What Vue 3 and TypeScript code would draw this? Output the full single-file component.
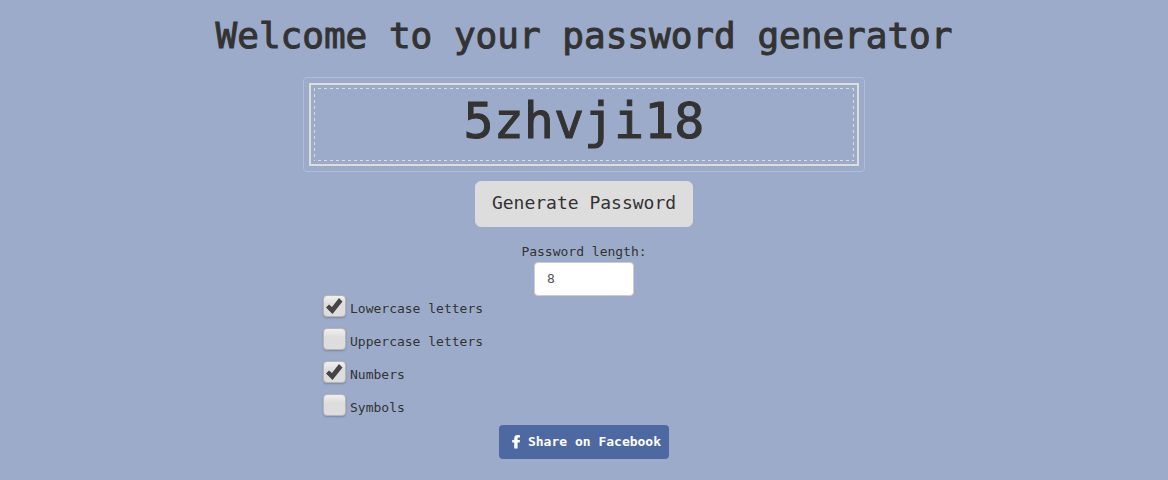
<script setup lang="ts">
import { ref } from 'vue'

interface CharacterSet {
  id: string
  label: string
  characters: string
  enabled: boolean
}

const password = ref('5zhvji18')
const length = ref('8')
const sets = ref<CharacterSet[]>([
  { id: 'lowercase', label: 'Lowercase letters', characters: 'abcdefghijklmnopqrstuvwxyz', enabled: true },
  { id: 'uppercase', label: 'Uppercase letters', characters: 'ABCDEFGHIJKLMNOPQRSTUVWXYZ', enabled: false },
  { id: 'numbers', label: 'Numbers', characters: '0123456789', enabled: true },
  { id: 'symbols', label: 'Symbols', characters: '!@#$%^&*()-_=+?', enabled: false },
])

function generate(): void {
  const pool = sets.value.filter((s) => s.enabled).map((s) => s.characters).join('')
  const count = Math.max(0, Math.min(64, Number(length.value) || 0))
  if (!pool) return
  password.value = Array.from({ length: count }, () => pool[Math.floor(Math.random() * pool.length)]).join('')
}
</script>

<template>
  <main class="page">
    <h1 class="title">Welcome to your password generator</h1>
    <section class="panel">
      <div class="frame">
        <div class="solid">
          <output class="password">{{ password }}</output>
        </div>
      </div>
      <button class="generate" type="button" @click="generate">Generate Password</button>
      <label class="length-label" for="length">Password length:</label>
      <input id="length" v-model="length" class="length" type="text" inputmode="numeric" />
      <ul class="options">
        <li v-for="set in sets" :key="set.id" class="option">
          <span class="tick">
            <input :id="set.id" v-model="set.enabled" type="checkbox" class="box" />
            <svg v-if="set.enabled" class="mark" viewBox="0 0 22 22" aria-hidden="true">
              <path d="M3 12.5 6 9.5 9 12 16 3 19.5 6.5 9.5 19Z" />
            </svg>
          </span>
          <label :for="set.id">{{ set.label }}</label>
        </li>
      </ul>
      <a class="share" href="#share">
        <svg class="logo" viewBox="0 0 8 14" aria-hidden="true">
          <path d="M8 .2V2.6H6.6Q5.6 2.6 5.6 3.6V5H8L7.6 7.5H5.6V13.5H2.2V7.5H.2V5H2.2V3.4Q2.2 0 5.9 0Z" />
        </svg>
        <span>Share on Facebook</span>
      </a>
    </section>
  </main>
</template>

<style>
body {
  background: #9dabca;
}
</style>

<style scoped>
.page {
  padding: 16px;
  color: #333;
  font: 13px/20px "DejaVu Sans Mono", monospace;
}

.title {
  margin: 0 0 21px;
  font-size: 36px;
  font-weight: 400;
  line-height: 40px;
  text-align: center;
  -webkit-text-stroke: 1px #333;
}

.panel {
  display: flex;
  flex-direction: column;
  align-items: center;
  max-width: 562px;
  margin: 0 auto;
}

.frame {
  box-sizing: border-box;
  width: 100%;
  padding: 5px;
  border: 1px solid #b0bdd8;
  border-radius: 4px;
}

.solid {
  padding: 3px;
  border: 2px solid #ddd;
}

.password {
  --dash-x: repeating-linear-gradient(90deg, #ddd 0 1px, transparent 1px 4px, #ddd 4px 6px);
  --dash-y: repeating-linear-gradient(#ddd 0 3px, transparent 3px 6px);
  display: block;
  min-height: 61px;
  padding: 3px 0 9px;
  background:
    var(--dash-x) top / 100% 1px no-repeat,
    var(--dash-x) bottom / 100% 1px no-repeat,
    var(--dash-y) left / 1px 100% no-repeat,
    var(--dash-y) right / 1px 100% no-repeat;
  font-size: 50px;
  line-height: 61px;
  text-align: center;
  -webkit-text-stroke: 1px #333;
}

.generate {
  margin: 9px 0 15px;
  padding: 9px 16px 11px;
  border: 1px solid #ddd;
  border-radius: 6px;
  background: #ddd;
  color: #333;
  font: 18px/24px "DejaVu Sans Mono", monospace;
  cursor: pointer;
}

.length {
  box-sizing: border-box;
  width: 100px;
  height: 34px;
  padding: 5px 12px 7px;
  border: 1px solid #ccc;
  border-radius: 4px;
  background: #fff;
  color: #555;
  font: 13px/20px "DejaVu Sans Mono", monospace;
}

.options {
  align-self: stretch;
  display: grid;
  gap: 9px;
  margin: -1px 0 7px;
  padding: 0 20px;
  list-style: none;
}

.option {
  display: flex;
  gap: 4px;
  height: 24px;
}

.option label {
  padding-top: 4px;
}

.tick {
  display: grid;
  width: 23px;
  height: 22px;
}

.box {
  grid-area: 1 / 1;
  width: 23px;
  height: 22px;
  margin: 0;
  appearance: none;
  border: 1px solid #b5b5b8;
  border-radius: 4px;
  background: linear-gradient(#f0f0f0, #ddd 40%);
  box-shadow: 0 1px 2px #7d879d;
}

.mark {
  grid-area: 1 / 1;
  width: 22px;
  height: 22px;
  fill: #444;
  pointer-events: none;
}

.share {
  display: flex;
  align-items: center;
  box-sizing: border-box;
  gap: 8px;
  height: 34px;
  padding: 0 8px 0 13px;
  border-radius: 4px;
  background: #4e69a2;
  color: #fff;
  font-weight: 700;
  text-decoration: none;
}

.logo {
  width: 8px;
  height: 14px;
  fill: #fff;
}
</style>
